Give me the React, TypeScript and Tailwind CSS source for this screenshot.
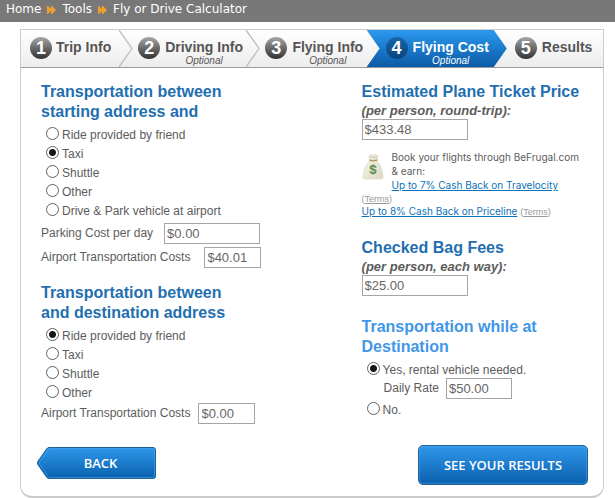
import { useState, type ReactNode } from "react";

const steps = [
  { n: 1, label: "Trip Info", optional: false, spacing: "pl-[9px] gap-[4px]" },
  { n: 2, label: "Driving Info", optional: true, spacing: "pl-[19px] gap-[5px]" },
  { n: 3, label: "Flying Info", optional: true, spacing: "pl-[19px] gap-[5px]" },
  { n: 4, label: "Flying Cost", optional: true, spacing: "pl-[19px] gap-[5px]" },
  { n: 5, label: "Results", optional: false, spacing: "pl-[21px] gap-[5px]" },
];

const ACTIVE_STEP = 4;

function DoubleArrow() {
  return (
    <svg className="mt-[2px] h-[8px] w-[9px]" viewBox="0 0 9 8" fill="#f0a02c" aria-hidden="true">
      <path d="M0 0h1l4 4-4 4H0z" />
      <path d="M4 0h1l4 4-4 4H4z" />
    </svg>
  );
}

function Breadcrumb() {
  return (
    <nav
      aria-label="Breadcrumb"
      className="flex h-[22px] items-center gap-[6px] bg-[#787878] pb-[4px] pl-[6px] font-['DejaVu_Sans',Verdana,sans-serif] text-[12px] leading-[18px] text-white"
    >
      <a href="#home">Home</a>
      <DoubleArrow />
      <a href="#tools">Tools</a>
      <DoubleArrow />
      <span>Fly or Drive Calculator</span>
    </nav>
  );
}

function StepBar() {
  return (
    <ol className="grid h-[38px] grid-cols-[98fr_127fr_120fr_127fr_109fr] border-b border-[#9a9a9a] bg-linear-to-b from-white to-[#ececec]">
      {steps.map((step) => {
        const active = step.n === ACTIVE_STEP;
        const divider = step.n < ACTIVE_STEP - 1;
        return (
          <li
            key={step.n}
            aria-current={active ? "step" : undefined}
            className={`relative flex items-start pt-[7px] ${step.spacing}`}
          >
            {active && (
              <span className="absolute inset-y-0 -right-[13px] left-0 bg-linear-to-b from-[#2b9af0] to-[#0a5ba6] [clip-path:polygon(0_0,calc(100%-13px)_0,100%_50%,calc(100%-13px)_100%,0_100%,13px_50%)]" />
            )}
            {divider && (
              <svg
                className="absolute left-full top-0 h-[37px] w-[14px]"
                viewBox="0 0 14 37"
                fill="none"
                stroke="#bdbdbd"
                strokeWidth="1.300"
                aria-hidden="true"
              >
                <path d="M0 0L13 18.500L0 37" />
              </svg>
            )}
            <span
              className={`relative flex size-[22px] shrink-0 items-center justify-center rounded-full text-[18px] leading-[22px] font-bold text-white ${
                active
                  ? "bg-linear-to-b from-[#1667ad] to-[#0b437c]"
                  : "bg-linear-to-b from-[#a8a8a8] to-[#333333]"
              }`}
            >
              {step.n}
            </span>
            <span
              className={`relative flex flex-col items-center whitespace-nowrap ${active ? "text-white" : "text-[#555555]"}`}
            >
              <span className="pt-[2px] text-[14px] leading-[16px] font-bold">{step.label}</span>
              {step.optional && <span className="text-[10px] leading-[11px] italic">Optional</span>}
            </span>
          </li>
        );
      })}
    </ol>
  );
}

function Heading({ children, light = false }: { children: ReactNode; light?: boolean }) {
  return (
    <h2 className={`text-[16px] leading-[20px] font-bold ${light ? "text-[#4196e8]" : "text-[#1f6fb0]"}`}>
      {children}
    </h2>
  );
}

function Radio({
  name,
  label,
  checked,
  onSelect,
}: {
  name: string;
  label: string;
  checked: boolean;
  onSelect: () => void;
}) {
  return (
    <label className="flex h-[19px] items-center gap-[3px] pl-[5px]">
      <input
        type="radio"
        name={name}
        checked={checked}
        onChange={onSelect}
        className="size-[13px] shrink-0 appearance-none rounded-full border border-[#606060] bg-white checked:bg-[radial-gradient(circle,#161616_3px,#ffffff_4px)]"
      />
      <span className="pt-[4px]">{label}</span>
    </label>
  );
}

function RadioGroup({ name, label, options, initial }: { name: string; label: string; options: string[]; initial: string }) {
  const [value, setValue] = useState(initial);
  return (
    <div role="radiogroup" aria-label={label}>
      {options.map((option) => (
        <Radio key={option} name={name} label={option} checked={value === option} onSelect={() => setValue(option)} />
      ))}
    </div>
  );
}

function MoneyInput({ id, value, width }: { id: string; value: string; width: string }) {
  return (
    <input
      id={id}
      type="text"
      defaultValue={value}
      className={`block h-[21px] border border-[#a5a5a5] bg-white px-[2px] text-[13px] text-[#666666] ${width}`}
    />
  );
}

function MoneyBag() {
  return (
    <svg className="mt-[4px] h-[26px] w-[22px] shrink-0" viewBox="0 0 22 26" aria-hidden="true">
      <defs>
        <linearGradient id="bag" x1="0" x2="1" y1="0" y2="1">
          <stop offset="0" stopColor="#f7f5e6" />
          <stop offset="1" stopColor="#dcdac6" />
        </linearGradient>
      </defs>
      <path
        d="M7 1.500Q9 .3 11 1Q14 .2 16 1.500L15 7Q20 12 21 23Q21 25 19 25H3Q1 25 1 23Q2 12 7.500 7Z"
        fill="url(#bag)"
        stroke="#d6d4c4"
        strokeWidth=".6"
      />
      <path d="M7.500 2Q11 3 15.500 2L15 3.500Q11 4.500 8 3.500Z" fill="#d4cfb8" />
      <path d="M7.500 6Q11 7.500 15.300 6" stroke="#b09a6c" strokeWidth="1.400" fill="none" />
      <text x="11" y="19.500" textAnchor="middle" fontSize="12" fontWeight="bold" fill="#5f9454">
        $
      </text>
    </svg>
  );
}

function Terms() {
  return (
    <span className="font-['Liberation_Sans',Arial,sans-serif] text-[9px] text-[#999999]">
      (
      <a href="#terms" className="underline">
        Terms
      </a>
      )
    </span>
  );
}

function BackButton() {
  return (
    <button
      type="button"
      className="relative mb-[4px] h-[32px] w-[119px] pl-[8px] font-['Open_Sans',sans-serif] text-[13px] font-semibold text-white"
    >
      <svg className="absolute inset-0 size-full" viewBox="0 0 119 32" aria-hidden="true">
        <defs>
          <linearGradient id="back" x1="0" x2="0" y1="0" y2="1">
            <stop offset="0" stopColor="#2f97ea" />
            <stop offset="1" stopColor="#0961ae" />
          </linearGradient>
        </defs>
        <path
          d="M12 .5H116Q118.500 .5 118.500 3V29Q118.500 31.500 116 31.500H12Q10.500 31.500 9.500 30L.8 17.500Q.2 16 .8 14.500L9.500 2Q10.500 .5 12 .5Z"
          fill="url(#back)"
          stroke="#1d6198"
        />
        <path
          d="M12 1.500H115.500Q117.500 1.500 117.500 3.500V28.500Q117.500 30.500 115.500 30.500H12L2 16Z"
          fill="none"
          stroke="#4aa5ec"
          strokeOpacity=".6"
        />
      </svg>
      <span className="relative">BACK</span>
    </button>
  );
}

export default function App() {
  const [rental, setRental] = useState(true);

  return (
    <div className="min-h-screen bg-white font-['Liberation_Sans',Arial,sans-serif] text-[12px] leading-[15px] text-[#5c5c5c]">
      <Breadcrumb />
      <main className="mt-[7px] mr-[11px] ml-[20px] rounded-b-[12px] border border-b-2 border-[#cccccc]">
        <StepBar />
        <form className="pt-[14px] pb-[11px]" onSubmit={(event) => event.preventDefault()}>
          <div className="grid grid-cols-[320fr_241fr] pl-[20px]">
            <div>
              <section>
                <Heading>
                  Transportation between
                  <br />
                  starting address and
                </Heading>
                <div className="pt-[2px] pb-[4px]">
                  <RadioGroup
                    name="start"
                    label="Transportation at starting address"
                    options={["Ride provided by friend", "Taxi", "Shuttle", "Other", "Drive & Park vehicle at airport"]}
                    initial="Taxi"
                  />
                </div>
                <div className="flex items-center gap-[11px]">
                  <label htmlFor="parking">Parking Cost per day</label>
                  <MoneyInput id="parking" value="$0.00" width="w-[96px]" />
                </div>
                <div className="mt-[3px] flex items-center gap-[14px]">
                  <label htmlFor="start-cost">Airport Transportation Costs</label>
                  <MoneyInput id="start-cost" value="$40.01" width="w-[57px]" />
                </div>
              </section>
              <section className="pt-[15px]">
                <Heading>
                  Transportation between
                  <br />
                  and destination address
                </Heading>
                <div className="py-[2px]">
                  <RadioGroup
                    name="destination"
                    label="Transportation at destination address"
                    options={["Ride provided by friend", "Taxi", "Shuttle", "Other"]}
                    initial="Ride provided by friend"
                  />
                </div>
                <div className="flex items-center gap-[8px]">
                  <label htmlFor="destination-cost">Airport Transportation Costs</label>
                  <MoneyInput id="destination-cost" value="$0.00" width="w-[57px]" />
                </div>
              </section>
            </div>

            <div>
              <section>
                <Heading>Estimated Plane Ticket Price</Heading>
                <label htmlFor="ticket" className="block h-[17px] text-[13px] leading-[18px] font-bold italic">
                  (per person, round-trip):
                </label>
                <MoneyInput id="ticket" value="$433.48" width="w-[106px]" />
                <div className="flex gap-[8px] pt-[10px] font-['Inter',Arial,sans-serif] text-[10px] leading-[14px]">
                  <MoneyBag />
                  <p>
                    Book your flights through BeFrugal.com
                    <br />
                    &amp; earn:
                    <br />
                    <a href="#travelocity" className="text-[#0b72b9] underline">
                      Up to 7% Cash Back on Travelocity
                    </a>
                  </p>
                </div>
                <p className="font-['Inter',Arial,sans-serif] text-[10px] leading-[12px]">
                  <Terms />
                  <br />
                  <a href="#priceline" className="text-[#0b72b9] underline">
                    Up to 8% Cash Back on Priceline
                  </a>{" "}
                  <Terms />
                </p>
              </section>
              <section className="pt-[20px]">
                <Heading>Checked Bag Fees</Heading>
                <label htmlFor="bag-fee" className="block h-[17px] text-[13px] leading-[18px] font-bold italic">
                  (per person, each way):
                </label>
                <MoneyInput id="bag-fee" value="$25.00" width="w-[106px]" />
              </section>
              <section className="pt-[21px]">
                <Heading light>
                  Transportation while at
                  <br />
                  Destination
                </Heading>
                <div className="pt-[2px]">
                  <Radio
                    name="rental"
                    label="Yes, rental vehicle needed."
                    checked={rental}
                    onSelect={() => setRental(true)}
                  />
                  <div className="flex items-center gap-[7px] pl-[22px]">
                    <label htmlFor="daily-rate">Daily Rate</label>
                    <MoneyInput id="daily-rate" value="$50.00" width="w-[66px]" />
                  </div>
                  <Radio name="rental" label="No." checked={!rental} onSelect={() => setRental(false)} />
                </div>
              </section>
            </div>
          </div>
          <div className="flex items-center justify-between pt-[21px] pr-[15px] pl-[16px]">
            <BackButton />
            <button
              type="submit"
              className="h-[40px] w-[170px] rounded-[5px] border border-[#1d6198] bg-linear-to-b from-[#2f97ea] to-[#0961ae] font-['Open_Sans',sans-serif] text-[13px] font-semibold text-white shadow-[inset_0_0_2px_#6bbcf7]"
            >
              SEE YOUR RESULTS
            </button>
          </div>
        </form>
      </main>
    </div>
  );
}
